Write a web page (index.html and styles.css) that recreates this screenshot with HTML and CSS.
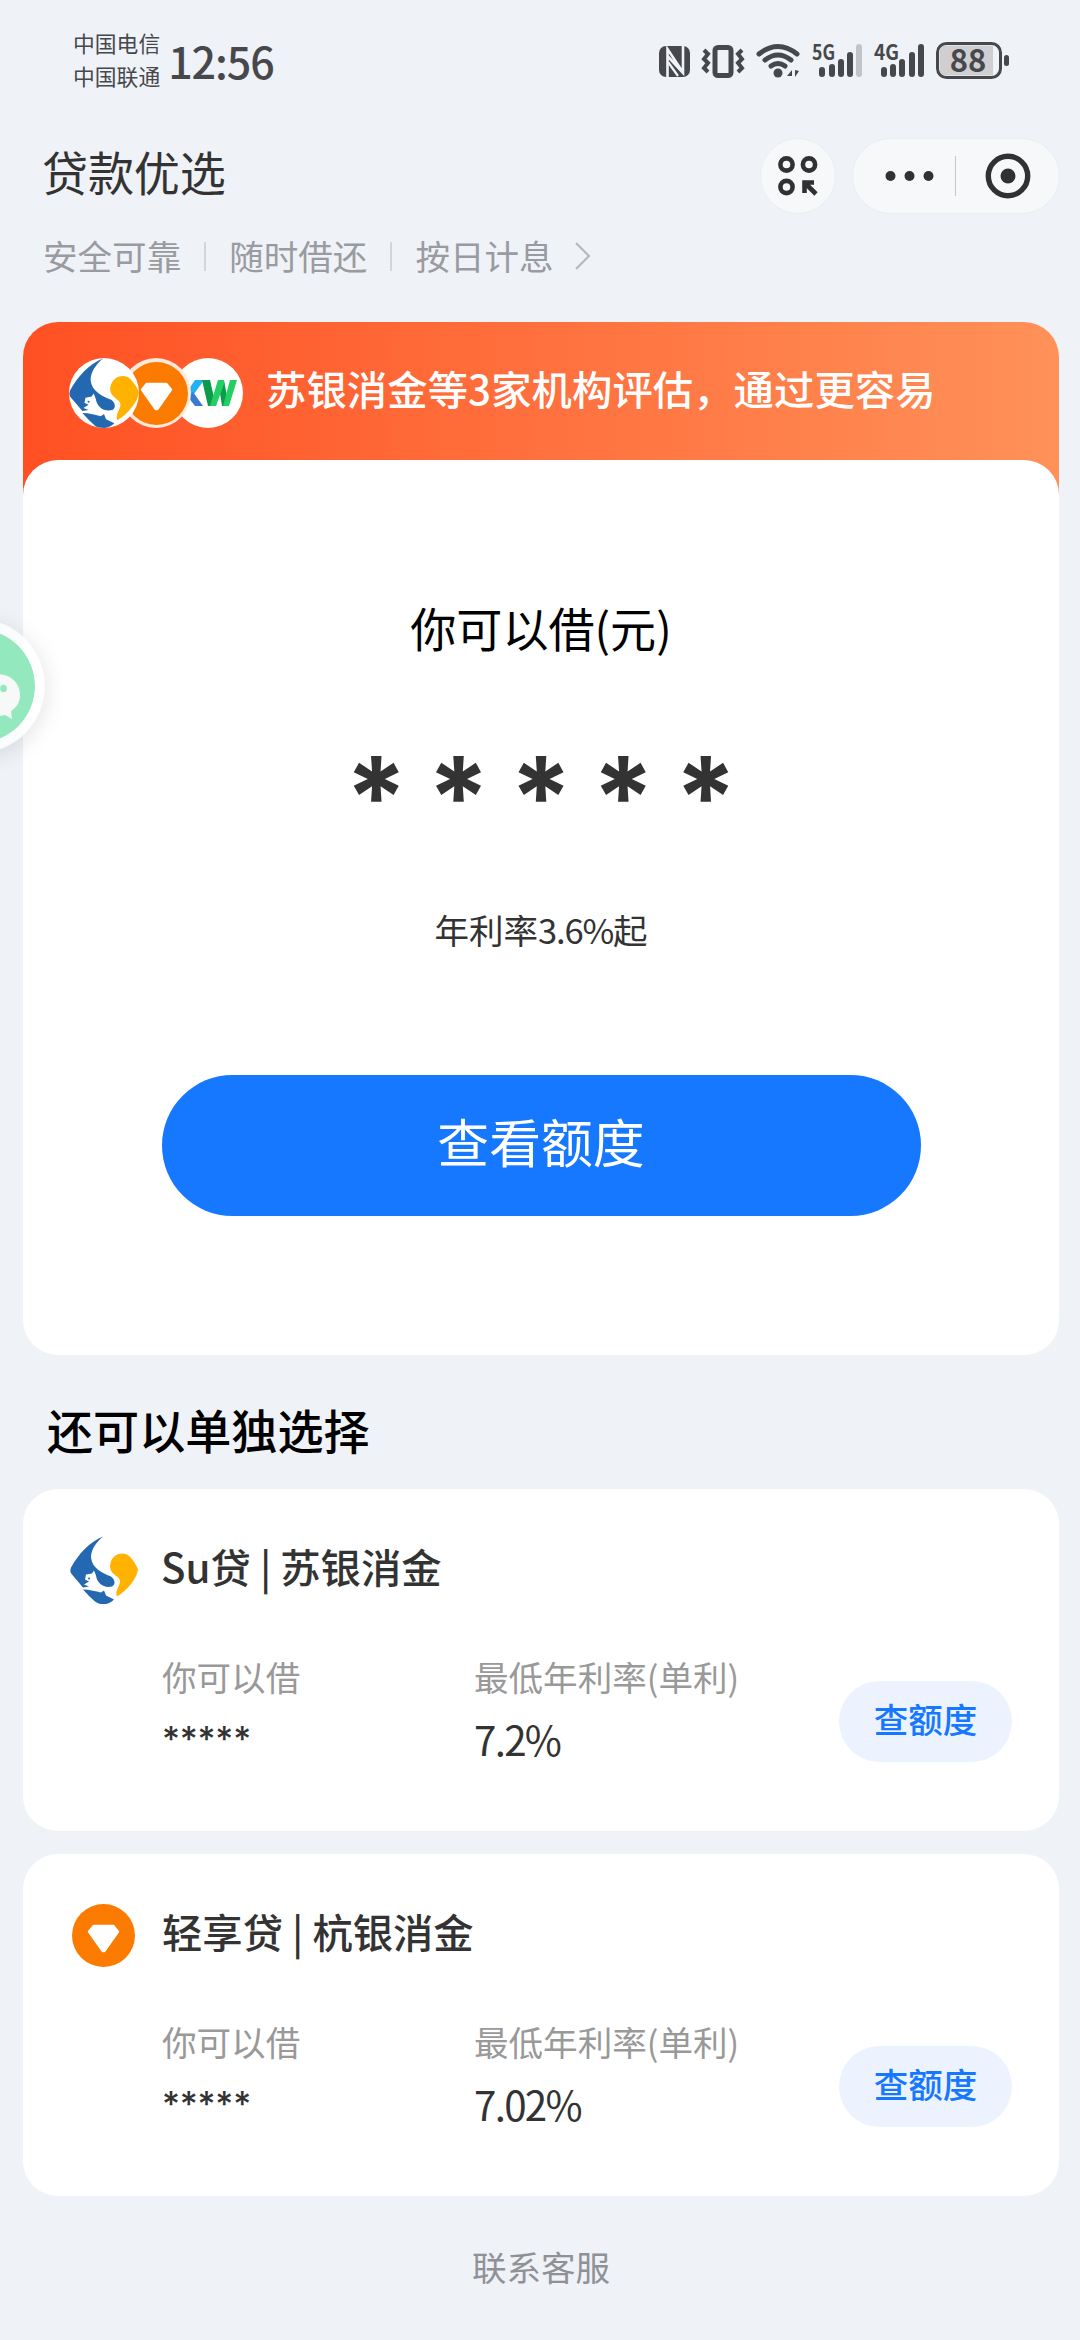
FILE: index.html
```html
<!DOCTYPE html>
<html lang="zh-CN">
<head>
<meta charset="utf-8">
<title>贷款优选</title>
<link rel="stylesheet" href="styles.css">
</head>
<body>
<svg width="0" height="0" class="defs" aria-hidden="true">
  <symbol id="su" viewBox="1 0.5 68 68">
    <path fill="#2468b1" d="M34 1C21 6 9 19 2 32C1 35 1 37 3 39L14 52L20 51L15 49L20 46L16 44L17 39L23 38L25 35L27 40C28 48 35 53 43 51C47 49 46 44 42 41C34 38 23 33 22 22C22 14 27 7 34 1Z"/>
    <path fill="#2468b1" d="M14 54C21 54 27 56 32 57L35 55L37 60L45 64C39 70 31 70 26 66Q20 61 14 54Z"/>
    <path fill="#ffb300" d="M41 30C42 20 51 16 58 19C63 22 67 29 69 34C68 43 58 55 48 61C45 53 56 47 48 41C44 38 41 36 41 30Z"/>
    <circle cx="20" cy="43" r="1" fill="#2468b1"/>
  </symbol>
  <symbol id="gem" viewBox="0 0 64 64">
    <circle cx="32" cy="32" r="32" fill="#fb7b00"/>
    <path fill="#fff" stroke="#fff" stroke-width="2" stroke-linejoin="round" d="M22 22H42L47 28L33 48H31L17 28Z"/>
  </symbol>
</svg>

<div class="status">
  <div class="carriers"><span>中国电信</span><span>中国联通</span></div>
  <div class="clock">12:56</div>
  <svg class="tray" width="380" height="80" viewBox="650 16 380 80">
    <g fill="#47484c">
      <rect x="659" y="46" width="31" height="31" rx="7"/>
      <path d="M667.500 77V49L683 72.500M683 46V73L667.500 56" fill="none" stroke="#f0f3f8" stroke-width="2.600"/>
      <path d="M668 62L678 76" fill="none" stroke="#f0f3f8" stroke-width="2.200"/>
    </g>
    <g fill="none" stroke="#47484c">
      <rect x="715" y="47.500" width="16" height="28" rx="3" stroke-width="5"/>
      <path stroke-width="4" d="M704 50L708 54L704 59L708 63L704 68L708 72M742 50L738 54L742 59L738 63L742 68L738 72"/>
      <path stroke-width="5" stroke-linecap="round" d="M759 54Q778 39 797 54M765 60Q778 50 791 60M771 66Q778 61 785 66"/>
    </g>
    <g fill="#47484c">
      <circle cx="778" cy="73" r="4.500"/>
      <path d="M792 70V76H787ZM795 70V77L799 71Z"/>
      <rect x="819" y="67" width="6" height="10" rx="3"/><rect x="829" y="64" width="6" height="13" rx="3"/><rect x="838" y="59" width="6" height="18" rx="3"/><rect x="847" y="52" width="6" height="25" rx="3"/><rect x="856" y="44" width="6" height="33" rx="3" fill="#c2c4c9"/>
      <rect x="881" y="67" width="6" height="10" rx="3"/><rect x="890" y="64" width="6" height="13" rx="3"/><rect x="899" y="59" width="6" height="18" rx="3"/><rect x="909" y="52" width="6" height="25" rx="3"/><rect x="918" y="44" width="6" height="33" rx="3"/>
      <text x="812" y="59.500" class="net" textLength="23" lengthAdjust="spacingAndGlyphs">5G</text>
      <text x="874" y="59.500" class="net" textLength="25" lengthAdjust="spacingAndGlyphs">4G</text>
      <rect x="937.500" y="43.500" width="63" height="34" rx="9" fill="#f0f3f8" stroke="#47484c" stroke-width="3"/>
      <path fill="#cfcfd2" d="M946 45.500H993V75.500H946Q939.500 75.500 939.500 69V52Q939.500 45.500 946 45.500Z"/>
      <rect x="1004" y="55" width="5" height="11" rx="2.500"/>
      <text x="968" y="71.500" class="level" text-anchor="middle">88</text>
    </g>
  </svg>
</div>

<header class="head">
  <h1>贷款优选</h1>
  <div class="round">
    <svg width="74" height="74" viewBox="761 139 74 74" fill="none" stroke="#303133" stroke-width="4.600">
      <circle cx="786.500" cy="164.500" r="6.100"/><circle cx="809" cy="164.500" r="6.100"/><circle cx="786.500" cy="187" r="6.100"/>
      <path d="M804.500 193V182.500H814M805 183L816 194"/>
    </svg>
  </div>
  <div class="capsule">
    <svg width="206" height="74" viewBox="853 139 206 74">
      <g fill="#303133"><circle cx="890.500" cy="176" r="5"/><circle cx="909.500" cy="176" r="5"/><circle cx="928.500" cy="176" r="5"/><circle cx="1008" cy="176" r="7.500"/></g>
      <path d="M955.500 156V196" stroke="#c4c6c9"/>
      <circle cx="1008" cy="176" r="19.700" fill="none" stroke="#303133" stroke-width="5.400"/>
    </svg>
  </div>
</header>

<div class="tags">
  <span>安全可靠</span><i></i><span>随时借还</span><i></i><span>按日计息</span>
  <svg width="18" height="30" viewBox="0 0 18 30"><path d="M2 2L15 15L2 28" fill="none" stroke="#b4b6ba" stroke-width="2"/></svg>
</div>

<main>
  <section class="hero">
    <div class="banner">
      <div class="logos">
        <span class="logo"><svg width="70" height="70"><use href="#su"/></svg></span>
        <span class="logo"><svg width="63" height="63"><use href="#gem"/></svg></span>
        <span class="logo"><svg width="70" height="70" viewBox="0 0 70 70">
          <path fill="#22b3f2" d="M22 22H31L21 36L16 41V31Z"/>
          <path fill="#3a7bd0" d="M15 39L20 34L30 48H22Z"/>
          <path fill="#0c9b4b" d="M29 22H37L42 44L40 48H35Z"/>
          <path fill="#0c9b4b" d="M45 22H51L55 44L53 48H49Z"/>
          <path fill="#22cf62" d="M37 48H43L51 26V22H45Z"/>
          <path fill="#22cf62" d="M50 48H56L64 22H57Z"/>
        </svg></span>
      </div>
      <p>苏银消金等3家机构评估，通过更容易</p>
    </div>
    <div class="quota">
      <h2>你可以借(元)</h2>
      <div class="stars"><b>*</b><b>*</b><b>*</b><b>*</b><b>*</b></div>
      <p>年利率<span class="num">3.6%</span>起</p>
      <button class="primary">查看额度</button>
    </div>
  </section>

  <h3>还可以单独选择</h3>

  <article class="offer">
    <div class="name"><svg width="68" height="68"><use href="#su"/></svg><span>Su贷 | 苏银消金</span></div>
    <div class="facts">
      <dl class="amount"><dt>你可以借</dt><dd class="mask">*****</dd></dl>
      <dl class="rate"><dt>最低年利率(单利)</dt><dd>7.2%</dd></dl>
      <button class="check">查额度</button>
    </div>
  </article>
  <article class="offer">
    <div class="name gem"><svg width="63" height="63"><use href="#gem"/></svg><span>轻享贷 | 杭银消金</span></div>
    <div class="facts">
      <dl class="amount"><dt>你可以借</dt><dd class="mask">*****</dd></dl>
      <dl class="rate"><dt>最低年利率(单利)</dt><dd>7.02%</dd></dl>
      <button class="check">查额度</button>
    </div>
  </article>
  <footer>联系客服</footer>
</main>

<div class="float">
  <svg width="70" height="134" viewBox="0 619 70 134"><path fill="#f6f9f8" d="M-3 674C12 674 20 684 20 695C20 702 17 707 11 711L12 719L5 715C-2 717-8 716-12 714V674Z"/><ellipse cx="3.500" cy="688.500" rx="3.300" ry="3.800" fill="#94e8be"/></svg>
</div>
</body>
</html>
```
FILE: styles.css
```css
* { box-sizing: border-box; margin: 0; padding: 0; }

body {
  width: 1080px;
  height: 2340px;
  overflow: hidden;
  position: relative;
  background: #eff2f7;
  color: #333;
  font-family: "Noto Sans CJK SC", sans-serif;
}

.defs { position: absolute; }
svg { display: block; flex: none; }

/* system status bar */
.status { display: flex; height: 122px; padding: 27px 50px 0 73px; color: #47484c; }
.carriers { display: flex; flex-direction: column; font-size: 21.8px; line-height: 32.5px; }
.clock { margin: 3px 0 0 8px; width: 480px; font-size: 43px; line-height: 60px; font-weight: 500; letter-spacing: -1.1px; }
.tray { position: absolute; left: 650px; top: 16px; }
.net { font: 700 21px "Noto Sans CJK SC", sans-serif; }
.level { font: 700 31px "Noto Sans CJK SC", sans-serif; }

/* title bar */
.head { display: flex; height: 106px; padding: 16px 20px 0 42px; }
h1 { width: 718px; margin-top: -1px; font-size: 46.08px; line-height: 68px; font-weight: 400; letter-spacing: -.2px; }
.round, .capsule { height: 76px; border: 1px solid #ebedf2; background: #f7f8fa; border-radius: 38px; }
.round { width: 76px; }
.capsule { width: 208px; margin-left: 16px; }

.tags { display: flex; align-items: center; height: 56px; padding-left: 43px; font-size: 34.56px; line-height: 56px; color: #999ba0; }
.tags span { margin-top: -2px; }
.tags i { width: 2px; height: 29px; margin: 0 23px; background: #d3d5da; }
.tags svg { margin-left: 20px; }

main { padding: 38px 21px 0 23px; }

/* hero card */
.hero { height: 1033px; border-radius: 35px; background: linear-gradient(90deg, #ff5023, #ff9159) no-repeat; background-size: 100% 200px; }
.banner { display: flex; height: 138px; padding: 36px 0 0 46px; }
.logos { display: flex; }
.logo { display: flex; align-items: center; justify-content: center; width: 70px; height: 70px; margin-right: -18px; border-radius: 50%; background: #fff; overflow: hidden; position: relative; z-index: 3; }
.logo:nth-child(2) { z-index: 2; background: #ffe9db; }
.logo:nth-child(3) { z-index: 1; }
.banner p { margin: -1px 0 0 41px; color: #fff; font-size: 40.32px; line-height: 62px; font-weight: 500; letter-spacing: .1px; white-space: nowrap; }
.quota { height: 895px; padding-top: 133px; border-radius: 35px; background: #fff; display: flex; flex-direction: column; align-items: center; }
h2 { font-size: 46.08px; line-height: 68px; font-weight: 400; color: #000; }
.stars { display: flex; height: 100px; margin-top: 85px; }
.stars b { width: 82.4px; text-align: center; font: 700 112px/100px Inter, sans-serif; display: flex; justify-content: center; }
.quota p { margin-top: 57px; font-size: 34.56px; line-height: 52px; }
.num { letter-spacing: -1.2px; }
button { border: 0; font-family: inherit; }
.primary { width: 759px; height: 141px; margin-top: 120px; padding-bottom: 10px; border-radius: 71px; background: #1677ff; color: #fff; font-size: 51.84px; }

h3 { padding: 40px 0 0 24px; height: 134px; font-size: 46.08px; line-height: 68px; font-weight: 500; color: #000; }

/* single offers */
.offer { height: 342px; margin-bottom: 23px; padding: 47px 47px 0; border-radius: 35px; background: #fff; }
.name { display: flex; align-items: center; gap: 23px; height: 68px; font-size: 40.32px; font-weight: 500; }
.name span { line-height: 60px; margin-top: -8px; }
.gem { padding-left: 2px; gap: 27px; }
.facts { display: flex; padding: 46px 0 0 92px; }
.amount { width: 312px; }
.rate { width: 365px; }
dt { font-size: 34.56px; line-height: 52px; color: #999; white-space: nowrap; }
dd { font-size: 40.32px; line-height: 56px; margin-top: 9px; letter-spacing: -1.7px; }
.mask { font: 500 34.56px/56px Inter, sans-serif; letter-spacing: -.2px; }
.check { width: 173px; height: 81px; margin-top: 31px; padding-bottom: 7px; border-radius: 41px; background: #ecf3ff; color: #1677ff; font-size: 34.56px; font-weight: 500; }

footer { margin-top: 44px; text-align: center; font-size: 34.56px; line-height: 52px; color: #8f9196; }

/* bubble docked at the screen edge */
.float { position: absolute; left: -89px; top: 619px; width: 134px; height: 134px; border: 10px solid rgba(255, 255, 255, .75); border-radius: 50%; background: #94e8be; background-clip: padding-box; box-shadow: 2px 4px 22px rgba(0, 0, 0, .1); }
.float svg { margin: -10px 0 0 79px; }
```
